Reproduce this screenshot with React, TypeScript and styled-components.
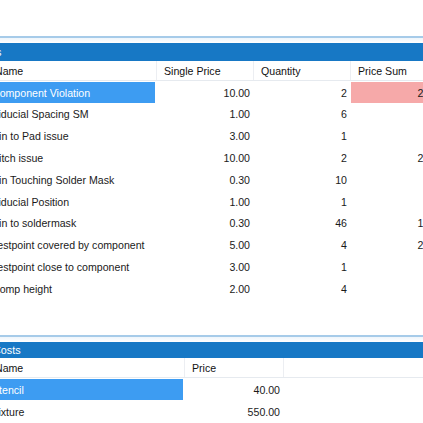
import React from "react";
import styled, { createGlobalStyle } from "styled-components";

const Global = createGlobalStyle`
  html, body {
    margin: 0;
    padding: 0;
    background: #ffffff;
    overflow: hidden;
    width: 423px;
    height: 423px;
  }
  body {
    font-family: "Liberation Sans", Arial, sans-serif;
    font-size: 10.6px;
    color: #1a1a1a;
  }
`;

const Page = styled.div`
  margin-left: -12px;
  width: 520px;
  padding-top: 36px;
  display: flex;
  flex-direction: column;
`;

const Panel = styled.section`
  display: flex;
  flex-direction: column;
  border-top: 2px solid #a6cbe9;
  padding-top: 5px;
  background: linear-gradient(#eef5fb, #ffffff 5px);
`;

const TitleBar = styled.div<{ $h: number; $indent: number }>`
  height: ${(p) => p.$h}px;
  background: #1778c5;
  color: #ffffff;
  display: flex;
  align-items: center;
  padding-left: ${(p) => p.$indent}px;
  white-space: nowrap;
  font-size: 10.8px;
`;

const TitleText = styled.span<{ $shift: number }>`
  margin-left: ${(p) => p.$shift}px;
`;

const Grid = styled.div`
  display: flex;
  flex-direction: column;
  background: #ffffff;
`;

const HeaderRow = styled.div`
  display: flex;
  height: 19px;
  border-bottom: 1px solid #e6eaef;
  background: #ffffff;
`;

const HeaderCell = styled.div<{ $w: number }>`
  width: ${(p) => p.$w}px;
  flex: none;
  box-sizing: border-box;
  padding-left: 7px;
  display: flex;
  align-items: center;
  border-right: 1px solid #eceef2;
  white-space: nowrap;
  overflow: hidden;
  color: #111111;
`;

const Row = styled.div<{ $h: number }>`
  display: flex;
  height: ${(p) => p.$h}px;
  margin-top: 1px;
`;

const Cell = styled.div<{ $w: number; $num?: boolean; $sel?: boolean; $warn?: boolean }>`
  width: ${(p) => p.$w}px;
  flex: none;
  box-sizing: border-box;
  display: flex;
  align-items: center;
  justify-content: ${(p) => (p.$num ? "flex-end" : "flex-start")};
  padding: ${(p) => (p.$num ? "0 4px 0 0" : "0 0 0 4px")};
  white-space: nowrap;
  overflow: hidden;
  background: ${(p) => (p.$sel ? "#3d9cf2" : p.$warn ? "#f6a9a9" : "transparent")};
  color: ${(p) => (p.$sel ? "#ffffff" : "#1a1a1a")};
  margin-right: ${(p) => (p.$sel ? 2 : 0)}px;
`;

const Spacer = styled.div`
  height: 36px;
`;

type Item = { name: string; price: number; qty: number };

const items: Item[] = [
  { name: "Component Violation", price: 10, qty: 2 },
  { name: "Fiducial Spacing SM", price: 1, qty: 6 },
  { name: "Pin to Pad issue", price: 3, qty: 1 },
  { name: "Pitch issue", price: 10, qty: 2 },
  { name: "Pin Touching Solder Mask", price: 0.3, qty: 10 },
  { name: "Fiducial Position", price: 1, qty: 1 },
  { name: "Pin to soldermask", price: 0.3, qty: 46 },
  { name: "Testpoint covered by component", price: 5, qty: 4 },
  { name: "Testpoint close to component", price: 3, qty: 1 },
  { name: "Comp height", price: 2, qty: 4 },
];

const costs = [
  { name: "Stencil", price: 40 },
  { name: "Fixture", price: 550 },
];

const W = { name: 169, single: 97, qty: 97, sum: 97 };

export default function App() {
  return (
    <>
      <Global />
      <Page>
        <Panel>
          <TitleBar $h={18} $indent={0}>
            <TitleText $shift={-16}>Errors</TitleText>
          </TitleBar>
          <Grid>
            <HeaderRow>
              <HeaderCell $w={W.name}>Name</HeaderCell>
              <HeaderCell $w={W.single}>Single Price</HeaderCell>
              <HeaderCell $w={W.qty}>Quantity</HeaderCell>
              <HeaderCell $w={W.sum}>Price Sum</HeaderCell>
            </HeaderRow>
            {items.map((it, i) => (
              <Row key={it.name} $h={i === 0 ? 21 : 20.8}>
                <Cell $w={i === 0 ? W.name - 2 : W.name} $sel={i === 0}>
                  {it.name}
                </Cell>
                <Cell $w={W.single} $num>
                  {it.price.toFixed(2)}
                </Cell>
                <Cell $w={W.qty} $num>
                  {it.qty}
                </Cell>
                <Cell $w={W.sum} $num $warn={i === 0}>
                  {(it.price * it.qty).toFixed(2)}
                </Cell>
              </Row>
            ))}
          </Grid>
          <Spacer />
        </Panel>
        <Panel>
          <TitleBar $h={16} $indent={5}>
            <TitleText $shift={0}>Costs</TitleText>
          </TitleBar>
          <Grid>
            <HeaderRow>
              <HeaderCell $w={197}>Name</HeaderCell>
              <HeaderCell $w={99}>Price</HeaderCell>
            </HeaderRow>
            {costs.map((c, i) => (
              <Row key={c.name} $h={21}>
                <Cell $w={i === 0 ? 195 : 197} $sel={i === 0}>
                  {c.name}
                </Cell>
                <Cell $w={99} $num>
                  {c.price.toFixed(2)}
                </Cell>
              </Row>
            ))}
          </Grid>
        </Panel>
      </Page>
    </>
  );
}
